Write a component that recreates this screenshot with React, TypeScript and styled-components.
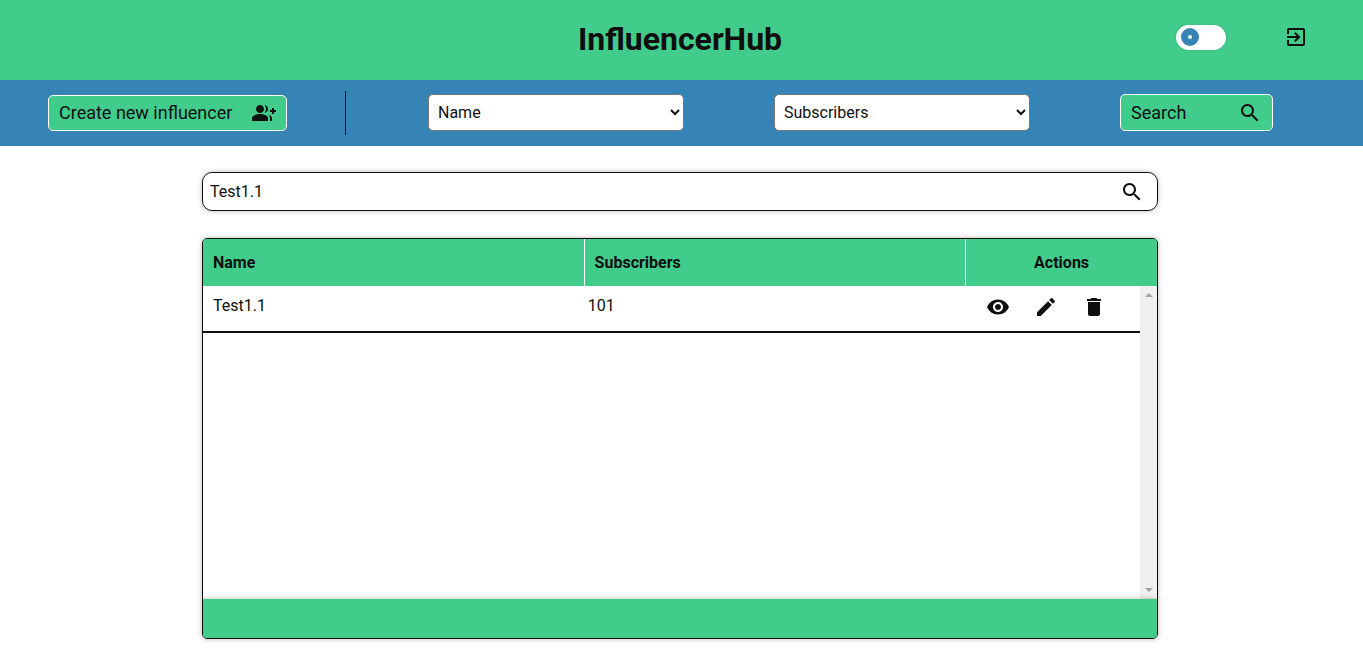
import React, { useState } from "react";
import styled, { createGlobalStyle } from "styled-components";

const green = "#42cc8c";
const blue = "#3683b5";
const ink = "#0f0f0f";

const GlobalStyle = createGlobalStyle`
  *, *::before, *::after { box-sizing: border-box; }
  body {
    margin: 0;
    background: #ffffff;
    color: ${ink};
    font-family: Roboto, "Liberation Sans", sans-serif;
    font-size: 16px;
    line-height: 20px;
  }
  button, input, select { font: inherit; color: inherit; }
`;

const Header = styled.header`
  display: grid;
  grid-template-columns: 1fr auto 1fr;
  align-items: center;
  height: 80px;
  padding: 0 55px 2px 52px;
  background: ${green};
`;

const Title = styled.h1`
  grid-column: 2;
  margin: 0;
  font-size: 32px;
  line-height: 40px;
  font-weight: 700;
`;

const HeaderTools = styled.div`
  display: flex;
  justify-content: flex-end;
  align-items: center;
  gap: 58px;
  padding-bottom: 4px;
`;

const Switch = styled.input`
  appearance: none;
  display: flex;
  align-items: center;
  width: 50px;
  height: 25px;
  margin: 0;
  padding: 0 5px 1px;
  border-radius: 13px;
  background: #ffffff;
  box-shadow: 0 0 3px rgba(0, 0, 0, 0.15);
  cursor: pointer;

  &::before {
    content: "";
    width: 18px;
    height: 18px;
    border: 7px solid ${blue};
    border-radius: 50%;
    background: #ffffff;
  }
  &:checked { justify-content: flex-end; }
`;

const IconButton = styled.button`
  display: flex;
  padding: 0;
  border: 0;
  background: none;
  cursor: pointer;
`;

const Toolbar = styled.section`
  display: flex;
  align-items: center;
  height: 66px;
  background: ${blue};
`;

const CreateArea = styled.div`
  display: flex;
  align-items: center;
  flex: 0 0 346px;
  height: 44px;
  padding-left: 48px;
  border-right: 1px solid ${ink};
`;

const FilterForm = styled.form`
  display: flex;
  flex: 1;
  justify-content: space-between;
  align-items: center;
  padding: 0 90px 1px 82px;
`;

const ActionButton = styled.button<{ $width: string; $height: string }>`
  display: flex;
  justify-content: space-between;
  align-items: center;
  width: ${(p) => p.$width};
  height: ${(p) => p.$height};
  padding: 0 10px;
  border: 1px solid #ffffff;
  border-radius: 5px;
  background: ${green};
  font-size: 18px;
  cursor: pointer;
`;

const Select = styled.select`
  width: 256px;
  height: 37px;
  padding: 0 5px 1px;
  border: 1px solid #767676;
  border-radius: 5px;
  background-color: #ffffff;
`;

const Main = styled.main`
  display: flex;
  flex-direction: column;
  align-items: center;
  gap: 27px;
  padding: 26px 19px 12px 16px;
`;

const SearchBox = styled.form`
  display: flex;
  align-items: center;
  width: 100%;
  max-width: 956px;
  height: 39px;
  padding: 0 13px 0 7px;
  border: 1px solid ${ink};
  border-radius: 10px;
  box-shadow: 0 0 5px rgba(0, 0, 0, 0.3);
`;

const SearchInput = styled.input`
  flex: 1;
  min-width: 0;
  padding: 0;
  border: 0;
  outline: 0;
  background: none;
`;

const TableCard = styled.section`
  display: grid;
  grid-template-columns: 1fr 17px;
  grid-template-rows: 47px 313px 39px;
  width: 100%;
  max-width: 956px;
  overflow: hidden;
  border: 1px solid ${ink};
  border-radius: 5px;
  box-shadow: 0 0 5px rgba(0, 0, 0, 0.3);
`;

const Table = styled.table`
  display: contents;
`;

const TableHead = styled.thead`
  display: grid;
  grid-column: 1 / -1;
  background: ${green};
`;

const TableBody = styled.tbody`
  display: block;
  grid-column: 1;
`;

const Row = styled.tr`
  display: grid;
  grid-template-columns: 2fr 2fr 1fr;
`;

const BodyRow = styled(Row)`
  height: 47px;
  border-bottom: 2px solid ${ink};
`;

const HeadCell = styled.th<{ $center?: boolean }>`
  display: flex;
  align-items: center;
  justify-content: ${(p) => (p.$center ? "center" : "flex-start")};
  padding: 0 10px;
  font-weight: 700;

  &:not(:last-child) { border-right: 1px solid #ffffff; }
`;

const Cell = styled.td`
  padding: 10px;
`;

const ActionCell = styled(Cell)`
  display: flex;
  justify-content: center;
  align-items: center;
  gap: 24px;
  padding: 0;
  padding-bottom: 3px;
`;

const ScrollTrack = styled.div`
  display: flex;
  flex-direction: column;
  justify-content: space-between;
  align-items: center;
  padding: 7px 0;
  background: #f0f0f0;
`;

const ScrollArrow = styled.span<{ $down?: boolean }>`
  border: 3px solid transparent;
  border-width: ${(p) => (p.$down ? "4px 4px 0" : "0 4px 4px")};
  border-color: ${(p) =>
    p.$down ? "#a3a3a3 transparent transparent" : "transparent transparent #a3a3a3"};
`;

const TableFooter = styled.footer`
  grid-column: 1 / -1;
  background: ${green};
  box-shadow: 0 0 5px rgba(0, 0, 0, 0.3);
`;

const paths = {
  groupAdd:
    "M22 9V7h-2v2h-2v2h2v2h2v-2h2V9zM8 12c2.21 0 4-1.79 4-4s-1.79-4-4-4-4 1.79-4 4 1.79 4 4 4zm0 1c-2.67 0-8 1.34-8 4v3h16v-3c0-2.66-5.33-4-8-4zM12.51 4.05C13.43 5.11 14 6.49 14 8s-.57 2.89-1.49 3.95C14.47 11.7 16 10.04 16 8s-1.53-3.7-3.49-3.95zM16.53 13.83C17.42 14.66 18 15.7 18 17v3h2v-3c0-1.45-1.59-2.51-3.47-3.17z",
  exit: "M10.09 15.59L11.5 17l5-5-5-5-1.41 1.41L12.67 11H3v2h9.67l-2.58 2.59zM19 3H5c-1.11 0-2 .9-2 2v4h2V5h14v14H5v-4H3v4c0 1.1.89 2 2 2h14c1.1 0 2-.9 2-2V5c0-1.1-.9-2-2-2z",
  search:
    "M15.5 14h-.79l-.28-.27C15.41 12.59 16 11.11 16 9.5 16 5.91 13.09 3 9.5 3S3 5.91 3 9.5 5.91 16 9.5 16c1.61 0 3.09-.59 4.23-1.57l.27.28v.79l5 4.99L20.49 19l-4.99-5zm-6 0C7.01 14 5 11.99 5 9.5S7.01 5 9.5 5 14 7.01 14 9.5 11.99 14 9.5 14z",
  view: "M12 4.5C7 4.5 2.73 7.61 1 12c1.73 4.39 6 7.5 11 7.5s9.27-3.11 11-7.5c-1.73-4.39-6-7.5-11-7.5zM12 17c-2.76 0-5-2.24-5-5s2.24-5 5-5 5 2.24 5 5-2.24 5-5 5zm0-8c-1.66 0-3 1.34-3 3s1.34 3 3 3 3-1.34 3-3-1.34-3-3-3z",
  edit: "M3 17.25V21h3.75L17.81 9.94l-3.75-3.75L3 17.25zM20.71 7.04c.39-.39.39-1.02 0-1.41l-2.34-2.34c-.39-.39-1.02-.39-1.41 0l-1.83 1.83 3.75 3.75 1.83-1.83z",
  remove: "M6 19c0 1.1.9 2 2 2h8c1.1 0 2-.9 2-2V7H6v12zM19 4h-3.5l-1-1h-5l-1 1H5v2h14V4z",
};

function Icon({ name }: { name: keyof typeof paths }) {
  return (
    <svg width="24" height="24" viewBox="0 0 24 24" fill="currentColor" aria-hidden="true">
      <path d={paths[name]} />
    </svg>
  );
}

const influencers = [{ name: "Test1.1", subscribers: 101 }];

export default function App() {
  const [query, setQuery] = useState("Test1.1");
  const stop = (e: React.FormEvent) => e.preventDefault();

  return (
    <>
      <GlobalStyle />
      <Header>
        <Title>InfluencerHub</Title>
        <HeaderTools>
          <Switch type="checkbox" role="switch" aria-label="Dark theme" />
          <IconButton type="button" aria-label="Log out">
            <Icon name="exit" />
          </IconButton>
        </HeaderTools>
      </Header>
      <Toolbar>
        <CreateArea>
          <ActionButton type="button" $width="239px" $height="36px">
            Create new influencer
            <Icon name="groupAdd" />
          </ActionButton>
        </CreateArea>
        <FilterForm onSubmit={stop}>
          <Select aria-label="Search field" defaultValue="Name">
            <option>Name</option>
          </Select>
          <Select aria-label="Sort by" defaultValue="Subscribers">
            <option>Subscribers</option>
          </Select>
          <ActionButton type="submit" $width="153px" $height="37px">
            Search
            <Icon name="search" />
          </ActionButton>
        </FilterForm>
      </Toolbar>
      <Main>
        <SearchBox onSubmit={stop}>
          <SearchInput
            aria-label="Search influencers"
            value={query}
            onChange={(e) => setQuery(e.target.value)}
          />
          <IconButton type="submit" aria-label="Search">
            <Icon name="search" />
          </IconButton>
        </SearchBox>
        <TableCard>
          <Table>
            <TableHead>
              <Row>
                <HeadCell>Name</HeadCell>
                <HeadCell>Subscribers</HeadCell>
                <HeadCell $center>Actions</HeadCell>
              </Row>
            </TableHead>
            <TableBody>
              {influencers.map((item) => (
                <BodyRow key={item.name}>
                  <Cell>{item.name}</Cell>
                  <Cell>{item.subscribers}</Cell>
                  <ActionCell>
                    <IconButton type="button" aria-label="View">
                      <Icon name="view" />
                    </IconButton>
                    <IconButton type="button" aria-label="Edit">
                      <Icon name="edit" />
                    </IconButton>
                    <IconButton type="button" aria-label="Delete">
                      <Icon name="remove" />
                    </IconButton>
                  </ActionCell>
                </BodyRow>
              ))}
            </TableBody>
          </Table>
          <ScrollTrack aria-hidden="true">
            <ScrollArrow />
            <ScrollArrow $down />
          </ScrollTrack>
          <TableFooter />
        </TableCard>
      </Main>
    </>
  );
}
